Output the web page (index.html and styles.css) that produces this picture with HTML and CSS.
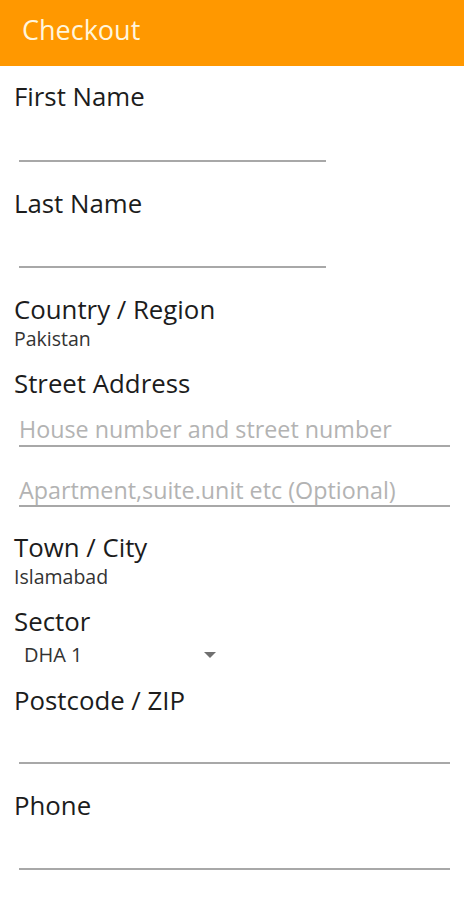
FILE: index.html
```html
<!DOCTYPE html>
<html>
<head>
<meta charset="utf-8">
<link rel="stylesheet" href="styles.css">
</head>
<body>
<header class="appbar"><span class="title">Checkout</span></header>
<main class="form">
  <section class="field">
    <div class="label">First Name</div>
    <div class="input short first"></div>
  </section>
  <section class="field">
    <div class="label">Last Name</div>
    <div class="input short"></div>
  </section>
  <section class="field static">
    <div class="label">Country / Region</div>
    <div class="value">Pakistan</div>
  </section>
  <section class="field address">
    <div class="label">Street Address</div>
    <div class="input wide ph">House number and street number</div>
    <div class="input wide ph second">Apartment,suite.unit etc (Optional)</div>
  </section>
  <section class="field static">
    <div class="label">Town / City</div>
    <div class="value">Islamabad</div>
  </section>
  <section class="field static sector">
    <div class="label">Sector</div>
    <div class="select"><span>DHA 1</span><svg class="caret" width="12" height="6" viewBox="0 0 12 6"><path d="M0 0h12L6 6z" fill="#707070"/></svg></div>
  </section>
  <section class="field">
    <div class="label">Postcode / ZIP</div>
    <div class="input wide postcode"></div>
  </section>
  <section class="field">
    <div class="label">Phone</div>
    <div class="input wide"></div>
  </section>
</main>
</body>
</html>
```
FILE: styles.css
```css
* { box-sizing: border-box; }
html, body { margin: 0; padding: 0; background: #fff; }
body { font-family: "Open Sans", "Noto Sans", sans-serif; color: #222; width: 464px; }
.appbar {
  height: 66px;
  background: #ff9800;
  display: flex;
  align-items: flex-start;
  padding: 15px 22px 0;
}
.title { color: #fff5dc; font-size: 27px; line-height: 30px; }
.form { display: flex; flex-direction: column; padding: 15px 14px 0; }
.field { display: flex; flex-direction: column; margin-bottom: 26px; }
.field.static { margin-bottom: 19px; }
.field.sector { margin-bottom: 20px; }
.label { font-size: 25.8px; line-height: 30px; color: #1c1c1c; white-space: nowrap; }
.input {
  margin-left: 5px;
  border-bottom: 2px solid #a8a8a8;
  height: 50px;
  font-size: 23.3px;
  color: #b3b3b3;
  white-space: nowrap;
}
.input.first { height: 51px; }
.input.short { width: 307px; }
.input.wide { width: 431px; }
.input.ph { height: 49px; padding-top: 18px; line-height: 26px; padding-left: 0; }
.input.second { height: 60px; padding-top: 30px; }
.input.postcode { height: 49px; }
.address { margin-bottom: 25px; }
.value { font-size: 19.5px; line-height: 20px; color: #333; margin-top: 5px; white-space: nowrap; }
.select {
  display: flex;
  align-items: center;
  margin-top: 9px;
  padding-left: 10px;
  width: 202px;
  justify-content: space-between;
  font-size: 20px;
  line-height: 20px;
  color: #333;
}
.caret { display: block; }
```
